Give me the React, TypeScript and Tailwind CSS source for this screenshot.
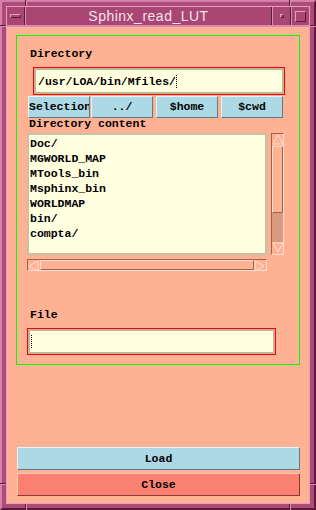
const mono = "font-['Liberation_Mono','Courier_New',monospace] font-bold text-[11.5px] text-black";

const entries = ["Doc/", "MGWORLD_MAP", "MTools_bin", "Msphinx_bin", "WORLDMAP", "bin/", "compta/"];

function Cursor() {
  return <span className="inline-block h-[13px] w-[1px] border-l border-dotted border-black align-middle" />;
}

function Arrow({ dir }: { dir: "up" | "down" | "left" | "right" }) {
  const pts = {
    up: "6,1 11,10 1,10",
    down: "1,1 11,1 6,10",
    left: "1,6 10,1 10,11",
    right: "1,1 10,6 1,11",
  }[dir];
  return (
    <svg width="12" height="12" viewBox="0 0 12 12" className="block">
      <polygon points={pts} fill="#ffb293" stroke="#ffe2d4" strokeWidth="1" />
    </svg>
  );
}

export default function App() {
  return (
    <div className="relative h-[510px] w-[316px] border-2 border-t-[#d283ab] border-l-[#d283ab] border-r-[#5a1c3a] border-b-[#5a1c3a] bg-[#b04a78] p-[4px]">
      {/* frame notches */}
      <span className="absolute left-[23px] top-[-2px] h-[6px] w-[2px] border-l border-r border-l-[#5a1c3a] border-r-[#d88cb2]" />
      <span className="absolute left-[287px] top-[-2px] h-[6px] w-[2px] border-l border-r border-l-[#5a1c3a] border-r-[#d88cb2]" />
      <span className="absolute left-[23px] bottom-[-2px] h-[6px] w-[2px] border-l border-r border-l-[#5a1c3a] border-r-[#d88cb2]" />
      <span className="absolute left-[287px] bottom-[-2px] h-[6px] w-[2px] border-l border-r border-l-[#5a1c3a] border-r-[#d88cb2]" />
      <span className="absolute left-[-2px] top-[23px] h-[2px] w-[6px] border-t border-b border-t-[#5a1c3a] border-b-[#d88cb2]" />
      <span className="absolute right-[-2px] top-[23px] h-[2px] w-[6px] border-t border-b border-t-[#5a1c3a] border-b-[#d88cb2]" />
      <span className="absolute left-[-2px] top-[481px] h-[2px] w-[6px] border-t border-b border-t-[#5a1c3a] border-b-[#d88cb2]" />
      <span className="absolute right-[-2px] top-[481px] h-[2px] w-[6px] border-t border-b border-t-[#5a1c3a] border-b-[#d88cb2]" />

      <div className="flex h-full w-full flex-col border border-[#e2a2c2]">
        {/* title bar */}
        <div className="flex h-[20px] border-b-2 border-b-[#d88cb2] bg-[#aa4674]">
          <div className="flex w-[18px] items-center justify-center border-r border-r-[#5a1c3a]">
            <span className="h-[4px] w-[11px] border border-t-[#e2a2c2] border-l-[#e2a2c2] border-r-[#5a1c3a] border-b-[#5a1c3a]" />
          </div>
          <div className="w-[1px] bg-[#d88cb2]" />
          <div className="flex flex-1 items-center justify-center font-['Liberation_Sans',Arial,sans-serif] text-[14px] tracking-[0.5px] text-[#f4e2ec]">
            Sphinx_read_LUT
          </div>
          <div className="w-[1px] bg-[#5a1c3a]" />
          <div className="w-[1px] bg-[#d88cb2]" />
          <div className="flex w-[18px] items-center justify-center border-r border-r-[#5a1c3a]">
            <span className="h-[4px] w-[4px] border border-t-[#e2a2c2] border-l-[#e2a2c2] border-r-[#5a1c3a] border-b-[#5a1c3a]" />
          </div>
          <div className="w-[1px] bg-[#d88cb2]" />
          <div className="flex flex-1 max-w-[17px] items-center justify-center">
            <span className="h-[11px] w-[11px] border border-t-[#e2a2c2] border-l-[#e2a2c2] border-r-[#5a1c3a] border-b-[#5a1c3a]" />
          </div>
        </div>

        {/* body */}
        <div className={`flex flex-1 flex-col bg-[#ffb293] ${mono}`}>
          <div className="ml-[9px] mt-[8px] flex h-[330px] w-[284px] flex-col border border-[#00ff00]">
            <div className="ml-[13px] mt-[11px] h-[13px] leading-[13px]">Directory</div>

            <div className="ml-[16px] mt-[7px] h-[28px] w-[252px] border border-[#ff0000]">
              <div className="flex h-full items-center border-2 border-[#bdb69c] bg-[#ffffe0] pl-[2px]">
                <span className="leading-[13px]">/usr/LOA/bin/Mfiles/</span>
                <Cursor />
              </div>
            </div>

            <div className="ml-[11px] mt-[1px] flex h-[22px]">
              <div className="w-[62px] overflow-hidden whitespace-nowrap border border-t-[#e4f4fa] border-l-[#e4f4fa] border-r-[#5e7c86] border-b-[#5e7c86] bg-[#add8e6] pt-[3px] leading-[13px]">
                Selection
              </div>
              <div className="ml-[1px] flex w-[62px] items-center justify-center border border-t-[#e4f4fa] border-l-[#e4f4fa] border-r-[#5e7c86] border-b-[#5e7c86] bg-[#add8e6]">
                ../
              </div>
              <div className="ml-[3px] flex w-[62px] items-center justify-center border border-t-[#e4f4fa] border-l-[#e4f4fa] border-r-[#5e7c86] border-b-[#5e7c86] bg-[#add8e6]">
                $home
              </div>
              <div className="ml-[3px] flex w-[62px] items-center justify-center border border-t-[#e4f4fa] border-l-[#e4f4fa] border-r-[#5e7c86] border-b-[#5e7c86] bg-[#add8e6]">
                $cwd
              </div>
            </div>

            <div className="ml-[12px] h-[12px] leading-[12px]">Directory content</div>

            <div className="ml-[10px] mt-[3px] flex h-[122px]">
              <div className="w-[240px] border-2 border-[#c6c2a6] bg-[#ffffe0] pl-[1px] pt-[1px]">
                {entries.map((e) => (
                  <div key={e} className="h-[15px] leading-[15px]">
                    {e}
                  </div>
                ))}
              </div>
              <div className="ml-[4px] flex w-[13px] flex-col border border-t-[#9a6450] border-l-[#9a6450] border-r-[#ffe0d2] border-b-[#ffe0d2]">
                <Arrow dir="up" />
                <div className="h-[67px] border border-t-[#ffe0d2] border-l-[#ffe0d2] border-r-[#9a6450] border-b-[#9a6450] bg-[#ffb293]" />
                <div className="flex-1 bg-[#d99a80]" />
                <Arrow dir="down" />
              </div>
            </div>

            <div className="ml-[10px] mt-[4px] flex h-[12px] w-[240px] border border-t-[#9a6450] border-l-[#9a6450] border-r-[#ffe0d2] border-b-[#ffe0d2]">
              <Arrow dir="left" />
              <div className="flex-1 border border-t-[#ffe0d2] border-l-[#ffe0d2] border-r-[#9a6450] border-b-[#9a6450]" />
              <Arrow dir="right" />
            </div>

            <div className="ml-[13px] mt-[37px] h-[13px] leading-[13px]">File</div>

            <div className="ml-[10px] mt-[7px] h-[27px] w-[249px] border border-[#ff0000]">
              <div className="flex h-full items-center border-2 border-[#bdb69c] bg-[#ffffe0] pl-[1px]">
                <Cursor />
              </div>
            </div>
          </div>

          <div className="ml-[10px] mt-[82px] flex h-[23px] w-[283px] items-center justify-center border border-t-[#e4f4fa] border-l-[#e4f4fa] border-r-[#5e7c86] border-b-[#5e7c86] bg-[#add8e6]">
            Load
          </div>
          <div className="ml-[10px] mt-[3px] flex h-[23px] w-[283px] items-center justify-center border border-t-[#ffc6b8] border-l-[#ffc6b8] border-r-[#8a3a30] border-b-[#8a3a30] bg-[#fa8072]">
            Close
          </div>
        </div>
      </div>
    </div>
  );
}
